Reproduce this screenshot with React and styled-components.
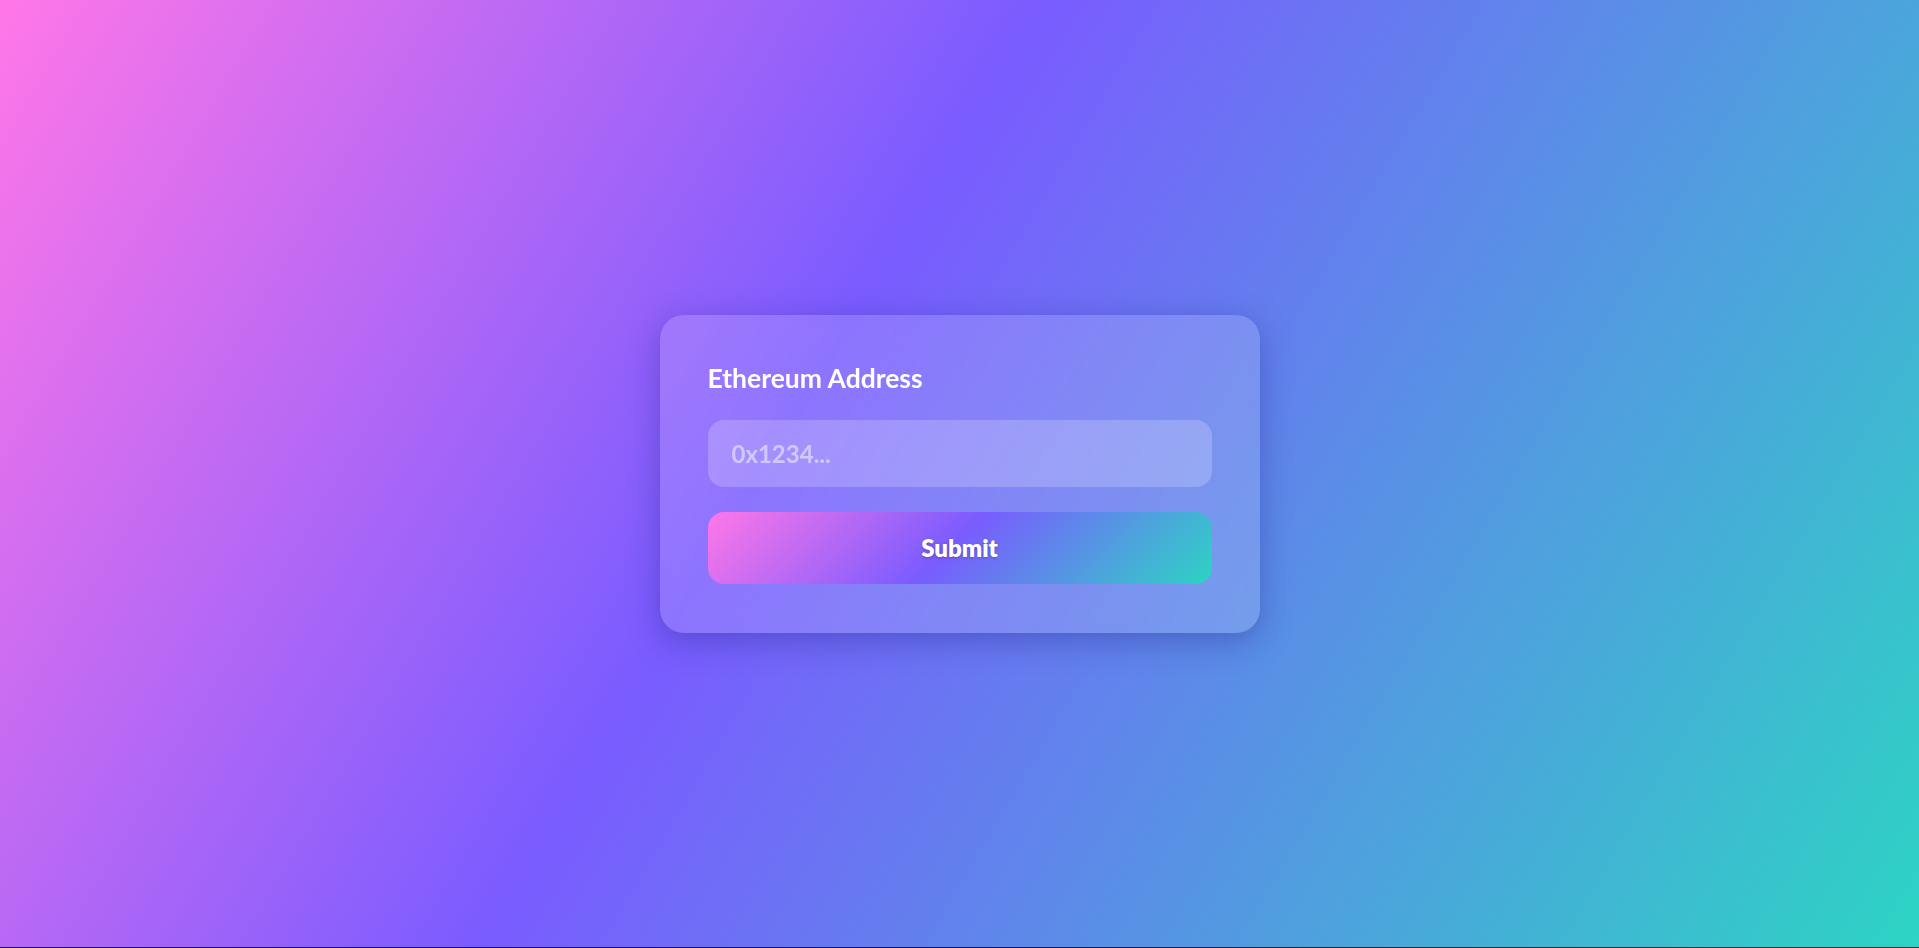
import React, { useState } from 'react';
import styled, { createGlobalStyle } from 'styled-components';

const GlobalStyle = createGlobalStyle`
  * {
    box-sizing: border-box;
  }
  html, body {
    margin: 0;
    padding: 0;
    background: #1c1a2c;
    font-family: 'Lato', 'Noto Sans', sans-serif;
  }
`;

const Page = styled.div`
  height: calc(100vh - 1px);
  display: flex;
  align-items: center;
  justify-content: center;
  background: linear-gradient(120.7deg, #ff77e8 0%, #7a5cff 42%, #2dd4c4 100%);
`;

const Card = styled.form`
  width: 600px;
  padding: 48px 48px 49px;
  display: flex;
  flex-direction: column;
  gap: 24px;
  border-radius: 24px;
  background: rgba(255, 255, 255, 0.15);
  box-shadow: 0 8px 32px 0 rgba(31, 38, 135, 0.37);
  backdrop-filter: blur(4px);
`;

const Label = styled.label`
  display: block;
  color: #fff;
  font-size: 26.5px;
  font-weight: 700;
  line-height: 31px;
  margin-bottom: 2px;
`;

const Input = styled.input`
  height: 67px;
  width: 100%;
  padding: 0 24px;
  border: none;
  outline: none;
  border-radius: 16px;
  background: rgba(255, 255, 255, 0.2);
  color: #fff;
  font-family: inherit;
  font-size: 24px;
  font-weight: 700;

  &::placeholder {
    color: rgba(255, 255, 255, 0.5);
  }
`;

const Button = styled.button`
  height: 72px;
  width: 100%;
  margin-top: 1px;
  border: none;
  border-radius: 16px;
  cursor: pointer;
  color: #fff;
  font-family: inherit;
  font-size: 24px;
  font-weight: 800;
  text-shadow: 0 1px 3px rgba(0, 0, 0, 0.25);
  background: linear-gradient(135deg, #ff77e8 0%, #7a5cff 48%, #2dd4c4 100%);
`;

export default function App() {
  const [address, setAddress] = useState('');

  const handleSubmit = e => {
    e.preventDefault();
  };

  return (
    <>
      <GlobalStyle />
      <Page>
        <Card onSubmit={handleSubmit}>
          <div>
            <Label htmlFor="eth-address">Ethereum Address</Label>
          </div>
          <Input
            id="eth-address"
            placeholder="0x1234..."
            value={address}
            onChange={e => setAddress(e.target.value)}
          />
          <Button type="submit">Submit</Button>
        </Card>
      </Page>
    </>
  );
}
